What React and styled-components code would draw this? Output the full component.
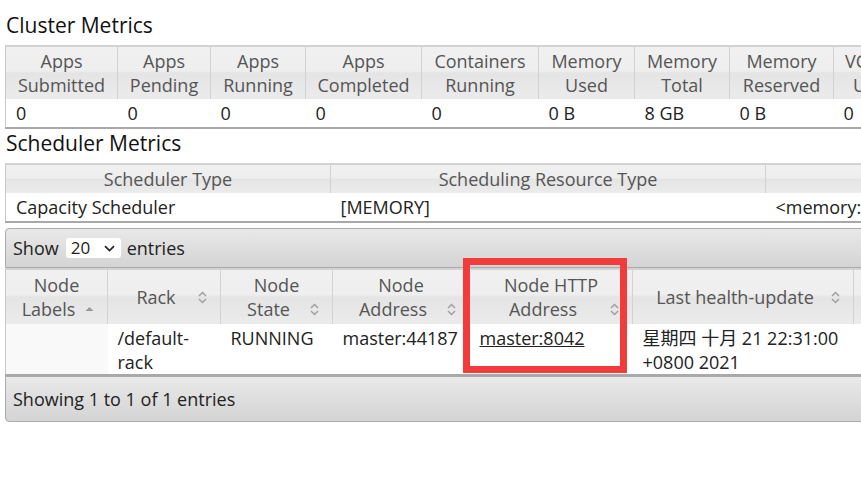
import React from "react";
import styled, { createGlobalStyle } from "styled-components";

const GlobalStyle = createGlobalStyle`
  body {
    margin: 0;
    background: #fff;
    color: #222;
    font-family: "Open Sans", "Noto Sans CJK SC", sans-serif;
    font-size: 18px;
    line-height: 24px;
    overflow: hidden;
  }
`;

const clusterCols = [
  { label: "Apps Submitted", w: 112, value: "0" },
  { label: "Apps Pending", w: 93, value: "0" },
  { label: "Apps Running", w: 95, value: "0" },
  { label: "Apps Completed", w: 116, value: "0" },
  { label: "Containers Running", w: 117, value: "0" },
  { label: "Memory Used", w: 96, value: "0 B" },
  { label: "Memory Total", w: 95, value: "8 GB" },
  { label: "Memory Reserved", w: 104, value: "0 B" },
  { label: "VCores Used", w: 82, value: "0" },
  { label: "VCores Total", w: 82, value: "8" },
  { label: "VCores Reserved", w: 104, value: "0" },
];

const schedulerCols = [
  { label: "Scheduler Type", w: 325, value: "Capacity Scheduler" },
  { label: "Scheduling Resource Type", w: 435, value: "[MEMORY]" },
  { label: "Minimum Allocation", w: 420, value: "<memory:1024, vCores:1>" },
];

const nodeCols = [
  { label: "Node Labels", w: 102, sort: "asc" },
  { label: "Rack", w: 113, sort: "both" },
  { label: "Node State", w: 112, sort: "both" },
  { label: "Node Address", w: 137, sort: "both" },
  { label: "Node HTTP Address", w: 163, sort: "both" },
  { label: "Last health-update", w: 221, sort: "both" },
  { label: "Health-report", w: 160, sort: "both" },
];

const Page = styled.div`
  padding-left: 5px;
  width: max-content;
`;

const Heading = styled.h2`
  margin: ${(p) => (p.$first ? "11px" : "0")} 0 6px 1px;
  font-size: 21px;
  font-weight: normal;
  line-height: 28px;
  color: #111;
`;

const Table = styled.table`
  border-collapse: collapse;
  table-layout: fixed;
  width: ${(p) => p.$width}px;
  border-left: 1px solid #c8c8c8;
  border-top: 2px solid #d2d2d2;
  border-bottom: 2px solid #a9a9a9;
`;

const Col = styled.col`
  width: ${(p) => p.$w}px;
`;

const Th = styled.th`
  padding: ${(p) => (p.$tall ? "3px" : "2px")} 10px;
  font-weight: normal;
  color: #555;
  text-align: center;
  vertical-align: middle;
  border-right: 1px solid #d2d2d2;
  background: linear-gradient(
    to bottom,
    #f0f0f0 0%,
    #eeeeee 46%,
    #e4e4e4 50%,
    #ebebeb 100%
  );
`;

const Td = styled.td`
  padding: ${(p) => (p.$tall ? "2px 10px 0" : "2px 10px")};
  text-align: left;
  vertical-align: top;
  background: ${(p) => (p.$sorted ? "#f9f9f9" : "#fff")};
`;

const DataWrap = styled.div`
  position: relative;
  width: max-content;
  margin-top: 5px;
`;

const Toolbar = styled.div`
  display: flex;
  align-items: center;
  padding-left: 7px;
  border: 1px solid #ababab;
  border-radius: ${(p) => (p.$bottom ? "0 0 4px 4px" : "4px 4px 0 0")};
  background: linear-gradient(to bottom, #e9e9e9 0%, #d4d4d4 100%);
  color: #222;
  height: ${(p) => (p.$bottom ? "44px" : "38px")};
`;

const SelectBox = styled.div`
  display: flex;
  align-items: center;
  justify-content: space-between;
  width: 55px;
  height: 20px;
  margin: 0 6px 0 7px;
  padding: 0 6px 0 5px;
  box-sizing: border-box;
  background: #fff;
  border-radius: 3px;
  font-size: 17px;
`;

const SortIcon = styled.span`
  float: right;
  display: flex;
  align-items: center;
  justify-content: center;
  width: 16px;
  height: 24px;
`;

const Link = styled.a`
  color: #222;
  text-decoration: underline;
`;

const Highlight = styled.div`
  position: absolute;
  left: 458px;
  top: 30px;
  width: 164px;
  height: 115px;
  box-sizing: border-box;
  border: 7px solid #f23b3b;
  pointer-events: none;
`;

const Chevron = () => (
  <svg width="11" height="7" viewBox="0 0 11 7">
    <polyline points="1,1.2 5.5,5.5 10,1.2" fill="none" stroke="#222" strokeWidth="1.7" />
  </svg>
);

const SortGlyph = ({ kind }) =>
  kind === "asc" ? (
    <svg width="9" height="13" viewBox="0 0 9 13">
      <polygon points="0.5,8 4.5,4 8.5,8" fill="#9a9a9a" />
    </svg>
  ) : (
    <svg width="9" height="13" viewBox="0 0 9 13">
      <polyline points="1,5 4.5,1.5 8,5" fill="none" stroke="#a0a0a0" strokeWidth="1.5" />
      <polyline points="1,8 4.5,11.5 8,8" fill="none" stroke="#a0a0a0" strokeWidth="1.5" />
    </svg>
  );

const sum = (cols) => cols.reduce((a, c) => a + c.w, 0);

const MetricsTable = ({ cols }) => (
  <Table $width={sum(cols)}>
    <colgroup>
      {cols.map((c) => (
        <Col key={c.label} $w={c.w} />
      ))}
    </colgroup>
    <thead>
      <tr>
        {cols.map((c) => (
          <Th key={c.label}>{c.label}</Th>
        ))}
      </tr>
    </thead>
    <tbody>
      <tr>
        {cols.map((c) => (
          <Td key={c.label}>{c.value}</Td>
        ))}
      </tr>
    </tbody>
  </Table>
);

export default function App() {
  return (
    <Page>
      <GlobalStyle />
      <Heading $first>Cluster Metrics</Heading>
      <MetricsTable cols={clusterCols} />
      <Heading>Scheduler Metrics</Heading>
      <MetricsTable cols={schedulerCols} />

      <DataWrap>
        <Toolbar>
          Show
          <SelectBox>
            20
            <Chevron />
          </SelectBox>
          entries
        </Toolbar>
        <Table $width={sum(nodeCols)}>
          <colgroup>
            {nodeCols.map((c) => (
              <Col key={c.label} $w={c.w} />
            ))}
          </colgroup>
          <thead>
            <tr>
              {nodeCols.map((c) => (
                <Th key={c.label} $tall>
                  {c.label}
                  <SortIcon>
                    <SortGlyph kind={c.sort} />
                  </SortIcon>
                </Th>
              ))}
            </tr>
          </thead>
          <tbody>
            <tr>
              <Td $tall $sorted></Td>
              <Td $tall>/default-rack</Td>
              <Td $tall>RUNNING</Td>
              <Td $tall>master:44187</Td>
              <Td $tall>
                <Link href="#">master:8042</Link>
              </Td>
              <Td $tall>星期四 十月 21 22:31:00 +0800 2021</Td>
              <Td $tall></Td>
            </tr>
          </tbody>
        </Table>
        <Toolbar $bottom>Showing 1 to 1 of 1 entries</Toolbar>
        <Highlight />
      </DataWrap>
    </Page>
  );
}
